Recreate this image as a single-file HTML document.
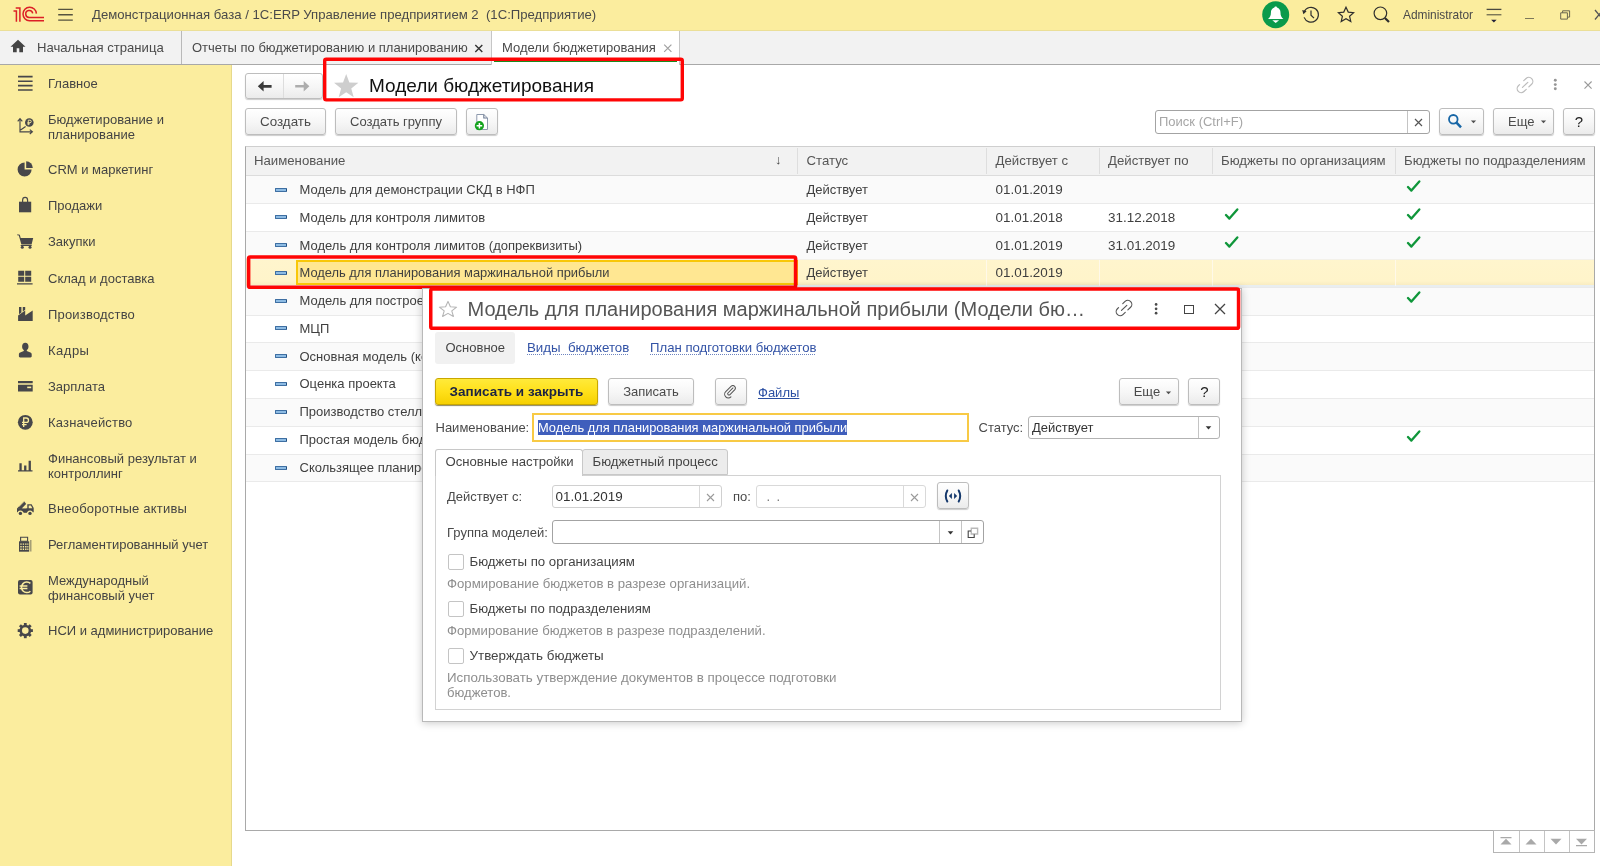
<!DOCTYPE html>
<html lang="ru"><head><meta charset="utf-8"><title>Модели бюджетирования</title>
<style>
*{box-sizing:border-box;margin:0;padding:0}
html,body{width:1600px;height:866px;overflow:hidden;background:#fff}
body{will-change:transform;font-family:"Liberation Sans",sans-serif;font-size:13px;color:#4a4a4a;position:relative}
.abs{position:absolute}
#top{position:absolute;left:0;top:0;width:1600px;height:31px;background:#fbed9e;border-bottom:1px solid #ebdf98}
#tabs{position:absolute;left:0;top:31px;width:1600px;height:34px;background:#f2f2f2;border-bottom:1px solid #a8a8a8}
#side{position:absolute;left:0;top:65px;width:232px;height:801px;background:#fbed9e;border-right:1px solid #e6d98c}
.t{position:absolute;white-space:nowrap;line-height:16px}
.mi{position:absolute;left:48px;white-space:nowrap;line-height:15px;font-size:13px;color:#444}
.btn{position:absolute;border:1px solid #bdbdbd;border-radius:3px;background:linear-gradient(#ffffff,#f6f6f6 55%,#ebebeb);box-shadow:0 1px 1px rgba(0,0,0,.2);text-align:center;font-size:13px;color:#4a4a4a;white-space:nowrap}
.row{position:absolute;left:246px;width:1348px;height:28px;box-shadow:inset 0 1px 0 #eaeaea}
.row.odd{background:#fafafa}
.c{position:absolute;white-space:nowrap;line-height:16px;font-size:13px;color:#3f3f3f}
.ic{position:absolute;left:29px;width:12px;height:4.400px;background:#8dbbe3;border:1px solid #3e6fa3;border-right:1.500px solid #24507f;border-radius:1px}
.dt{font-size:13.450px}
.lnk{color:#3353a6;text-decoration:underline dotted #6d84c0;text-decoration-thickness:1px;text-underline-offset:1.500px}
</style></head><body>
<div id="top">
<svg class="abs" style="left:0;top:0" width="80" height="30" viewBox="0 0 80 30">
<g fill="none" stroke="#dc1f26" stroke-width="1.5">
<path d="M13.500 10.900H16.400V21.800M15.700 7.900H19.900V21.800"/>
<path d="M36.400 13.600A6.700 6.700 0 1 0 29.500 20.700H44"/>
<path d="M32.700 13.400A3.500 3.500 0 1 0 29.500 17.500H44"/>
</g>
<g stroke="#55533f" stroke-width="1.300"><path d="M58.200 9.400H72.800M58.200 14.750H72.800M58.200 20.100H72.800"/></g></svg>
<div class="t" style="left:92px;top:7px;font-size:13.15px;color:#4a4a4a;white-space:pre">Демонстрационная база / 1С:ERP Управление предприятием 2  (1С:Предприятие)</div>
<svg class="abs" style="left:1262px;top:1px" width="28" height="28" viewBox="0 0 28 28"><circle cx="13.7" cy="13.7" r="13.5" fill="#0a9a4b"/><path d="M13.7 5.4c-.8 0-1.3.5-1.3 1.2-2.300.7-3.500 2.600-3.500 5.100 0 2.800-.9 4.700-2.900 6.300h15.400c-2-1.600-2.900-3.500-2.900-6.300 0-2.500-1.200-4.400-3.500-5.100 0-.7-.5-1.200-1.300-1.200z" fill="#fff"/><path d="M10.300 19.200h6.800l-3.400 2.700z" fill="#fff"/></svg>
<svg class="abs" style="left:1301px;top:5px" width="20" height="20" viewBox="0 0 20 20"><g fill="none" stroke="#2e2e2e" stroke-width="1.2"><path d="M3.300 6.600A7.400 7.400 0 1 1 3.100 12.400"/><path d="M10 5.500V10.200L13 13.200"/></g><path d="M1.200 5L5.600 6.200 2.400 9.200z" fill="#2e2e2e"/></svg>
<svg class="abs" style="left:1336px;top:5px" width="20" height="20" viewBox="0 0 20 20"><path d="M10 2.200l2.250 4.900 5.350.6-4 3.600 1.200 5.300-4.800-2.800-4.800 2.800 1.200-5.300-4-3.600 5.350-.6z" fill="none" stroke="#2e2e2e" stroke-width="1.2" stroke-linejoin="miter"/></svg>
<svg class="abs" style="left:1372px;top:5px" width="20" height="20" viewBox="0 0 20 20"><circle cx="8.4" cy="8.3" r="6.300" fill="none" stroke="#2e2e2e" stroke-width="1.2"/><path d="M12.900 12.900L17 17.100" stroke="#2e2e2e" stroke-width="2.200"/></svg>
<div class="t" style="left:1403px;top:7px;font-size:11.9px;color:#4a4a4a">Administrator</div>
<svg class="abs" style="left:1485px;top:7px" width="18" height="18" viewBox="0 0 18 18"><g stroke="#4a4a40" stroke-width="1.300"><path d="M1.600 2.400H16.400"/><path d="M1.600 7.750H16.400" stroke="#6f6b50"/></g><path d="M6.100 12.700H11.600L8.850 15.500z" fill="#22223a"/></svg>
<div class="abs" style="left:1525px;top:18px;width:9.200px;height:1.200px;background:#7d785a"></div>
<svg class="abs" style="left:1559px;top:9px" width="12" height="12" viewBox="0 0 12 12"><g fill="none" stroke="#6a6650" stroke-width="1"><path d="M1.700 3.800H8.400V10.100H1.700z"/><path d="M3.600 3.800V1.800H10.600V8.100H8.400"/></g></svg>
<svg class="abs" style="left:1593px;top:8px" width="12" height="14" viewBox="0 0 12 14"><path d="M2 2L10 11.500M10 2L2 11.500" stroke="#555" stroke-width="1.300"/></svg>
</div>
<div id="tabs">
<svg class="abs" style="left:10px;top:8px" width="16" height="14" viewBox="0 0 16 14"><path d="M8 0.800L0.500 7.800H3V13.200H6.700V9.200H9.300V13.200H13V7.800H15.500z" fill="#444"/></svg>
<div class="t" style="left:37px;top:9px;font-size:13.1px">Начальная страница</div>
<div class="abs" style="left:181px;top:0;width:1px;height:33px;background:#b9b9b9"></div>
<div class="t" style="left:192px;top:9px;font-size:13px">Отчеты по бюджетированию и планированию</div>
<svg class="abs" style="left:473px;top:11.500px" width="10" height="10" viewBox="0 0 10 10"><path d="M2.300 1.900L9.300 8.900M9.300 1.900L2.300 8.900" stroke="#333" stroke-width="1.400"/></svg>
<div class="abs" style="left:491px;top:0;width:189px;height:34px;background:#fff;border-left:1px solid #c6c6c6;border-right:1px solid #c6c6c6"></div>
<div class="t" style="left:502px;top:9px;font-size:13px">Модели бюджетирования</div>
<svg class="abs" style="left:662px;top:11.500px" width="10" height="10" viewBox="0 0 10 10"><path d="M2.200 1.700L9.400 8.900M9.400 1.700L2.200 8.900" stroke="#a0a0a0" stroke-width="1.200"/></svg>
<div class="abs" style="left:494px;top:29px;width:183px;height:2px;background:#1d8a1d"></div>
</div>
<div id="side">
<div class="mi" style="top:11.0px">Главное</div>
<div class="mi" style="top:47.0px;letter-spacing:0.05px">Бюджетирование и<br>планирование</div>
<div class="mi" style="top:97.3px">CRM и маркетинг</div>
<div class="mi" style="top:133.1px">Продажи</div>
<div class="mi" style="top:169.3px">Закупки</div>
<div class="mi" style="top:205.5px">Склад и доставка</div>
<div class="mi" style="top:241.8px;letter-spacing:0.19px">Производство</div>
<div class="mi" style="top:277.8px;letter-spacing:0.5px">Кадры</div>
<div class="mi" style="top:313.9px">Зарплата</div>
<div class="mi" style="top:350.0px;letter-spacing:0.17px">Казначейство</div>
<div class="mi" style="top:385.8px">Финансовый результат и<br>контроллинг</div>
<div class="mi" style="top:435.8px;letter-spacing:0.22px">Внеоборотные активы</div>
<div class="mi" style="top:471.9px">Регламентированный учет</div>
<div class="mi" style="top:507.7px">Международный<br>финансовый учет</div>
<div class="mi" style="top:558.1px">НСИ и администрирование</div>
<svg class="abs" style="left:0;top:0" width="48" height="600" viewBox="0 65 48 600">
<g fill="#47474a" stroke="none">
<!-- main -->
<path d="M18 75.800h14.600v1.650H18zM18 80.400h14.600v1.650H18zM18 84.800h14.600v1.650H18zM18 89.200h14.600v1.650H18z"/>
<!-- budgeting -->
<g fill="none" stroke="#47474a" stroke-width="1.150"><path d="M20 118.800V131.800H32M17.700 121.300L20 118.600 22.300 121.300M29.800 129.600L32.400 131.800 29.800 134M20.600 130L25.600 126.600"/></g><circle cx="29.300" cy="122.500" r="4.300" fill="#47474a"/><path d="M28.300 125.200V120.200H30a1.250 1.250 0 0 1 0 2.500H27.400M27.400 123.900H30" fill="none" stroke="#fbed9e" stroke-width=".9"/>
<!-- crm pie -->
<path d="M24.600 162.500A7 7 0 1 0 31.600 169.500H24.600z"/><path d="M26.200 161.300A6.600 6.600 0 0 1 32.800 167.900H26.200z"/>
<!-- bag -->
<path d="M19 201.700H31.200V212.300H19z"/><path d="M22.600 203.500V200.200a2.500 2.800 0 0 1 5 0V203.500" fill="none" stroke="#47474a" stroke-width="1.200"/>
<!-- cart -->
<path d="M17.400 234.300l2.400.5.900 3.100h12.500l-1.600 6.500H21.400l-2.600-8.900-1.600-.3zM20.700 245h11v1H20.700z"/><circle cx="22.300" cy="247.300" r="1.500"/><circle cx="30" cy="247.300" r="1.500"/>
<!-- warehouse -->
<path d="M18.200 270.700h6v5.100h-6zM25.200 270.700h6v5.100h-6zM18.200 276.700h6v5.100h-6zM25.200 276.700h6v5.100h-6zM17 283.300h15.600v1.300H17z"/>
<!-- factory -->
<path d="M18.100 321V315.600L25.200 310.600V315.600L32.700 310.400V321zM19 307.100H21.400V312.600L19 314.300zM22.800 307.100H25.200V309.700L22.800 311.500z"/>
<!-- person -->
<path d="M25.300 342.800c2 0 3.200 1.500 3.200 3.600 0 1.600-.7 3-1.700 3.700v.9l3.600 1.500c.9.400 1.300 1.100 1.300 2v1.700c0 .7-.5 1.200-1.200 1.200H20.100c-.7 0-1.200-.5-1.200-1.200v-1.700c0-.9.400-1.600 1.300-2l3.600-1.500v-.9c-1-.7-1.700-2.100-1.700-3.700 0-2.100 1.200-3.600 3.200-3.600z"/>
<!-- card -->
<path d="M18 381h14.700v2.300H18zM18 384.700h14.700v6.700H18z"/><path d="M27.200 386.600h4v1.600h-4z" fill="#fbed9e"/>
<!-- ruble coin -->
<circle cx="25.300" cy="422.300" r="7.400"/>
<g fill="none" stroke="#fbed9e" stroke-width="1.300"><path d="M23.700 427V418H26.300a2.200 2.200 0 0 1 0 4.400H22M22 424.600H26.600"/></g>
<!-- bars -->
<path d="M19.400 463.300h2.300v7h-2.300zM24.100 465.600h2.300v4.700h-2.300zM28.600 460.700h2.300v9.600h-2.300zM18 470.300h14.500v1.200H18z"/>
<!-- truck -->
<path d="M17 508.400L24.100 501.200 26.200 503.900 21.400 509z"/><path d="M18.600 506L23.800 500.800 24.600 501.700 19.400 507z" fill="#fbed9e" opacity=".45"/>
<path d="M17 508.300H27.300V504.200H31.600L33.700 508V512.300H17z"/><path d="M28.700 505.500H30.900L32.400 508.300H28.700z" fill="#fbed9e"/><path d="M22.200 508.300L26.300 504.200V508.300z" fill="#fbed9e"/>
<path d="M23 511H27.500L26.800 512.700H23.700z"/>
<circle cx="20.400" cy="513.300" r="2.900" fill="#fbed9e"/><circle cx="30" cy="513.300" r="2.900" fill="#fbed9e"/><circle cx="20.400" cy="513.400" r="1.700"/><circle cx="30" cy="513.400" r="1.700"/>
<!-- calc -->
<path d="M19 541.300h10.200v10.400H19z"/><path d="M20.600 537.300h7v4h-7z" fill="none" stroke="#47474a" stroke-width="1.100"/><path d="M30.200 540h1.200v11.500h-1.200z" opacity=".6"/>
<g fill="#fbed9e"><path d="M20.300 543.400h1.400v1.400h-1.400zM22.700 543.400h1.400v1.400h-1.400zM25.100 543.400h1.400v1.400h-1.400zM27.300 543.400h1.100v1.400h-1.100zM20.300 546h1.400v1.400h-1.400zM22.700 546h1.400v1.400h-1.400zM25.100 546h1.400v1.400h-1.400zM27.300 546h1.100v1.400h-1.100zM20.300 548.600h1.400v1.400h-1.400zM22.700 548.600h1.400v1.400h-1.400zM25.100 548.600h1.400v1.400h-1.400zM27.300 548.600h1.100v1.400h-1.100z"/></g>
<!-- euro -->
<rect x="18" y="580" width="14.600" height="14.600" rx="2"/>
<g fill="none" stroke="#fbed9e" stroke-width="1.500"><path d="M30.400 583.400A5.300 5.300 0 1 0 30.400 591.200M19.600 586H27.400M19.600 588.600H27.400"/></g>
<!-- gear -->
<g transform="translate(25.300 630.600)"><circle r="4.600" fill="none" stroke="#47474a" stroke-width="2.600"/>
<g><rect x="-1.400" y="-7.600" width="2.800" height="3"/><rect x="-1.400" y="4.600" width="2.800" height="3"/><rect x="-7.600" y="-1.400" width="3" height="2.800"/><rect x="4.600" y="-1.400" width="3" height="2.800"/>
<g transform="rotate(45)"><rect x="-1.400" y="-7.600" width="2.800" height="3"/><rect x="-1.400" y="4.600" width="2.800" height="3"/><rect x="-7.600" y="-1.400" width="3" height="2.800"/><rect x="4.600" y="-1.400" width="3" height="2.800"/></g></g></g>
</g></svg>
</div>
<div id="main">
<div class="btn" style="left:245px;top:73px;width:77.500px;height:26px"></div>
<div class="abs" style="left:283.300px;top:74px;width:1px;height:24px;background:#dddddd"></div>
<svg class="abs" style="left:257px;top:80px" width="16" height="13" viewBox="0 0 16 13"><path d="M0.800 6.300L6.600 1V4.900H14.600V7.700H6.600V11.600z" fill="#3a3a3a"/></svg>
<svg class="abs" style="left:294px;top:80px" width="16" height="13" viewBox="0 0 16 13"><path d="M15.400 6.300L9.700 1V5.100H1.200V7.500H9.700V11.600z" fill="#adadad"/></svg>
<svg class="abs" style="left:333px;top:73.400px" width="26.400" height="25.400" viewBox="0 0 26 25"><path d="M13 1l3.100 8.300 8.900.4-7 5.500 2.400 8.600L13 18.900 5.600 23.800 8 15.200 1 9.700l8.900-.4z" fill="#cecece"/></svg>
<div class="t" style="left:369px;top:74px;font-size:19px;line-height:24px;color:#111">Модели бюджетирования</div>
<div class="btn" style="left:245px;top:108px;width:81px;height:27px;line-height:25px;font-size:13.400px">Создать</div>
<div class="btn" style="left:335px;top:108px;width:122px;height:27px;line-height:25px">Создать группу</div>
<div class="btn" style="left:466px;top:108px;width:32px;height:27px"></div>
<svg class="abs" style="left:473px;top:112px" width="18" height="20" viewBox="0 0 18 20"><path d="M3.800 2.500H10.800L14.500 6V17.500H3.800z" fill="#fff" stroke="#8d99ad" stroke-width="1"/><path d="M10.800 2.500V6H14.500" fill="none" stroke="#6d7b93" stroke-width="1.100"/><circle cx="6.400" cy="13.700" r="4.600" fill="#13a31d"/><path d="M6.400 10.900V16.500M3.600 13.700H9.200" stroke="#fff" stroke-width="1.500"/></svg>
<svg class="abs" style="left:1514.700px;top:74.800px" width="20" height="20" viewBox="0 0 20 20"><path d="M8.76 5.65L11.08 3.45A4.0 4.0 0 0 1 16.60 9.24L13.85 11.86M4.56 9.66L3.40 10.76A4.0 4.0 0 0 0 8.92 16.55L11.24 14.35M7.47 12.41L12.82 7.31" fill="none" stroke="#bcbcbc" stroke-width="1.200" stroke-linecap="round"/></svg>
<svg class="abs" style="left:1552px;top:77px" width="6" height="16" viewBox="0 0 6 16"><g fill="#969696"><circle cx="3.300" cy="3.300" r="1.450"/><circle cx="3.300" cy="7.600" r="1.450"/><circle cx="3.300" cy="11.800" r="1.450"/></g></svg>
<svg class="abs" style="left:1582.600px;top:80px" width="10" height="10" viewBox="0 0 10 10"><path d="M1.500 1.500L8.600 8.600M8.600 1.500L1.500 8.600" stroke="#9a9a9a" stroke-width="1.100"/></svg>
<div class="abs" style="left:1155px;top:110px;width:275px;height:24px;border:1px solid #a3a3a3;border-radius:3px;background:#fff"></div>
<div class="abs" style="left:1407px;top:111px;width:1px;height:22px;background:#c4c4c4"></div>
<div class="t" style="left:1159px;top:114px;font-size:13px;color:#a6a6a6">Поиск (Ctrl+F)</div>
<svg class="abs" style="left:1414px;top:118px" width="9" height="9" viewBox="0 0 9 9"><path d="M1 1L8 8M8 1L1 8" stroke="#555" stroke-width="1.200"/></svg>
<div class="btn" style="left:1439px;top:108px;width:45px;height:27px"></div>
<svg class="abs" style="left:1447px;top:113px" width="16" height="16" viewBox="0 0 16 16"><circle cx="6.300" cy="6.300" r="4.300" fill="none" stroke="#1766a6" stroke-width="1.800"/><path d="M9.500 9.700L14 14.300" stroke="#1766a6" stroke-width="2.500"/></svg>
<svg class="abs" style="left:1470px;top:120px" width="7" height="4" viewBox="0 0 7 4"><path d="M0.900 0.500H6.100L3.500 3.300z" fill="#505050"/></svg>
<div class="btn" style="left:1493px;top:108px;width:61px;height:27px;line-height:25px;text-align:left;padding-left:14px">Еще</div>
<svg class="abs" style="left:1540px;top:120px" width="7" height="4" viewBox="0 0 7 4"><path d="M0.900 0.500H6.100L3.500 3.300z" fill="#505050"/></svg>
<div class="btn" style="left:1563px;top:108px;width:32px;height:27px;line-height:26px;color:#222;font-size:15px">?</div>
<div class="abs" style="left:245px;top:146px;width:1350px;height:685px;border:1px solid #a9a9a9;border-top-color:#cfcfcf;background:#fff"></div>
<div class="abs" style="left:246px;top:147px;width:1348px;height:29px;background:#f2f2f2;border-bottom:1px solid #dcdcdc"></div>
<div class="abs" style="left:797px;top:148px;width:1px;height:26px;background:#dedede"></div><div class="abs" style="left:986px;top:148px;width:1px;height:26px;background:#dedede"></div><div class="abs" style="left:1099px;top:148px;width:1px;height:26px;background:#dedede"></div><div class="abs" style="left:1212px;top:148px;width:1px;height:26px;background:#dedede"></div><div class="abs" style="left:1395px;top:148px;width:1px;height:26px;background:#dedede"></div>
<div class="t" style="left:254px;top:153px;color:#555;font-size:13.2px">Наименование</div><div class="t" style="left:806.5px;top:153px;color:#555;font-size:13.2px">Статус</div><div class="t" style="left:995.5px;top:153px;color:#555;font-size:13.2px">Действует с</div><div class="t" style="left:1108px;top:153px;color:#555;font-size:13.2px">Действует по</div><div class="t" style="left:1221px;top:153px;color:#555;font-size:13.2px">Бюджеты по организациям</div><div class="t" style="left:1404px;top:153px;color:#555;font-size:13.2px">Бюджеты по подразделениям</div><div class="t" style="left:775px;top:152px;color:#444;font-size:13px">↓</div>
<!--rows-->
<div class="row odd" style="top:176px;height:27px;box-shadow:none"><div class="ic" style="top:12px"></div><div class="c" style="left:53.500px;top:6px">Модель для демонстрации СКД в НФП</div><div class="c" style="left:560.500px;top:6px">Действует</div><div class="c dt" style="left:749.500px;top:6px">01.01.2019</div><svg class="abs" style="left:1160px;top:4px" width="15" height="13" viewBox="0 0 15 13"><path d="M2 7L5.400 10.600 13.300 1.400" fill="none" stroke="#0f963a" stroke-width="2.300" stroke-linecap="round" stroke-linejoin="round"/></svg></div>
<div class="row" style="top:203px;height:28px"><div class="ic" style="top:12px"></div><div class="c" style="left:53.500px;top:7px">Модель для контроля лимитов</div><div class="c" style="left:560.500px;top:7px">Действует</div><div class="c dt" style="left:749.500px;top:7px">01.01.2018</div><div class="c dt" style="left:862px;top:7px">31.12.2018</div><svg class="abs" style="left:978px;top:5px" width="15" height="13" viewBox="0 0 15 13"><path d="M2 7L5.400 10.600 13.300 1.400" fill="none" stroke="#0f963a" stroke-width="2.300" stroke-linecap="round" stroke-linejoin="round"/></svg><svg class="abs" style="left:1160px;top:5px" width="15" height="13" viewBox="0 0 15 13"><path d="M2 7L5.400 10.600 13.300 1.400" fill="none" stroke="#0f963a" stroke-width="2.300" stroke-linecap="round" stroke-linejoin="round"/></svg></div>
<div class="row odd" style="top:231px;height:28px"><div class="ic" style="top:12px"></div><div class="c" style="left:53.500px;top:7px">Модель для контроля лимитов (допреквизиты)</div><div class="c" style="left:560.500px;top:7px">Действует</div><div class="c dt" style="left:749.500px;top:7px">01.01.2019</div><div class="c dt" style="left:862px;top:7px">31.01.2019</div><svg class="abs" style="left:978px;top:5px" width="15" height="13" viewBox="0 0 15 13"><path d="M2 7L5.400 10.600 13.300 1.400" fill="none" stroke="#0f963a" stroke-width="2.300" stroke-linecap="round" stroke-linejoin="round"/></svg><svg class="abs" style="left:1160px;top:5px" width="15" height="13" viewBox="0 0 15 13"><path d="M2 7L5.400 10.600 13.300 1.400" fill="none" stroke="#0f963a" stroke-width="2.300" stroke-linecap="round" stroke-linejoin="round"/></svg></div>
<div class="row" style="top:259px;height:28px;background:linear-gradient(#fff5cd 0,#fff4ca 22px,#f8ebc0 26.500px,#e9eef0 26.500px);box-shadow:inset 0 1px 0 #f3f1ea"><div class="abs" style="left:49.700px;top:1px;width:502px;height:25px;background:#ffe792;border:2.100px solid #f8c708"></div><div class="abs" style="left:740px;top:1px;width:1px;height:25.500px;background:#fffaf0;opacity:.8"></div><div class="abs" style="left:853px;top:1px;width:1px;height:25.500px;background:#fffaf0;opacity:.8"></div><div class="abs" style="left:966px;top:1px;width:1px;height:25.500px;background:#fffaf0;opacity:.8"></div><div class="abs" style="left:1149px;top:1px;width:1px;height:25.500px;background:#fffaf0;opacity:.8"></div><div class="ic" style="top:12px"></div><div class="c" style="left:53.500px;top:6px;font-size:12.900px">Модель для планирования маржинальной прибыли</div><div class="c" style="left:560.500px;top:6px">Действует</div><div class="c dt" style="left:749.500px;top:6px">01.01.2019</div></div>
<div class="row odd" style="top:287px;height:28px"><div class="ic" style="top:12px"></div><div class="c" style="left:53.500px;top:6px">Модель для построения бюджетов</div><div class="c" style="left:560.500px;top:6px">Действует</div><div class="c dt" style="left:749.500px;top:6px">01.01.2019</div><svg class="abs" style="left:1160px;top:4px" width="15" height="13" viewBox="0 0 15 13"><path d="M2 7L5.400 10.600 13.300 1.400" fill="none" stroke="#0f963a" stroke-width="2.300" stroke-linecap="round" stroke-linejoin="round"/></svg></div>
<div class="row" style="top:315px;height:27px"><div class="ic" style="top:11px"></div><div class="c" style="left:53.500px;top:6px">МЦП</div><div class="c" style="left:560.500px;top:6px">Действует</div><div class="c dt" style="left:749.500px;top:6px">01.01.2019</div></div>
<div class="row odd" style="top:342px;height:28px"><div class="ic" style="top:12px"></div><div class="c" style="left:53.500px;top:7px">Основная модель (консолидация)</div><div class="c" style="left:560.500px;top:7px">Действует</div><div class="c dt" style="left:749.500px;top:7px">01.01.2019</div></div>
<div class="row" style="top:370px;height:28px"><div class="ic" style="top:12px"></div><div class="c" style="left:53.500px;top:6px">Оценка проекта</div><div class="c" style="left:560.500px;top:6px">Действует</div><div class="c dt" style="left:749.500px;top:6px">01.01.2019</div></div>
<div class="row odd" style="top:398px;height:28px"><div class="ic" style="top:12px"></div><div class="c" style="left:53.500px;top:6px">Производство стеллажей</div><div class="c" style="left:560.500px;top:6px">Действует</div><div class="c dt" style="left:749.500px;top:6px">01.01.2019</div></div>
<div class="row" style="top:426px;height:28px"><div class="ic" style="top:12px"></div><div class="c" style="left:53.500px;top:6px">Простая модель бюджетирования</div><div class="c" style="left:560.500px;top:6px">Действует</div><div class="c dt" style="left:749.500px;top:6px">01.01.2019</div><svg class="abs" style="left:1160px;top:4px" width="15" height="13" viewBox="0 0 15 13"><path d="M2 7L5.400 10.600 13.300 1.400" fill="none" stroke="#0f963a" stroke-width="2.300" stroke-linecap="round" stroke-linejoin="round"/></svg></div>
<div class="row odd" style="top:454px;height:27px"><div class="ic" style="top:12px"></div><div class="c" style="left:53.500px;top:6px">Скользящее планирование</div><div class="c" style="left:560.500px;top:6px">Действует</div><div class="c dt" style="left:749.500px;top:6px">01.01.2019</div></div>
<div class="row" style="top:481px;height:1px"></div>
<!--/rows-->
<div class="abs" style="left:1493px;top:830px;width:102px;height:23px;border:1px solid #b5b5b5;background:#fff"></div>
<div class="abs" style="left:1518.5px;top:831px;width:1px;height:21px;background:#c4c4c4"></div><div class="abs" style="left:1543.8px;top:831px;width:1px;height:21px;background:#c4c4c4"></div><div class="abs" style="left:1569px;top:831px;width:1px;height:21px;background:#c4c4c4"></div>
<svg class="abs" style="left:1493px;top:830px" width="102" height="23" viewBox="0 0 102 23"><g fill="#a9a9a9"><path d="M7.500 14.500L13 8.700 18.500 14.500zM7.500 7H18.500V8.200H7.500z"/><path d="M32.500 14.500L38 8.700 43.500 14.500z"/><path d="M57.500 8.700L63 14.500 68.500 8.700z"/><path d="M83 8.700L88.500 14.500 94 8.700zM83 15H94V16.200H83z"/></g></svg>
<svg class="abs" style="left:0;top:0;pointer-events:none" width="1600" height="866" viewBox="0 0 1600 866"><rect x="324.70" y="59.20" width="357.60" height="40.70" rx="1.6" fill="none" stroke="#ff0505" stroke-width="3.4"/><rect x="248.60" y="257.00" width="547.00" height="30.30" rx="1.6" fill="none" stroke="#ff0505" stroke-width="3.6"/></svg>
</div>
<div id="dlg" style="font-size:13px;position:absolute;left:422px;top:288px;width:820px;height:434px;background:#fff;border:1px solid #b9b9b9;box-shadow:0 1px 8px rgba(0,0,0,.22)">
<svg class="abs" style="left:14.700px;top:11.200px" width="20" height="17.700" viewBox="0 0 20 19" preserveAspectRatio="none"><path d="M10 1.500l2.400 5.800 6.200.4-4.800 4 1.600 6L10 14.300 4.600 17.700l1.600-6-4.800-4 6.200-.4z" fill="#fff" stroke="#b5b5b5" stroke-width="1.100" stroke-linejoin="round"/></svg>
<div class="t" style="left:44.5px;top:7px;font-size:20px;line-height:26px;color:#555">Модель для планирования маржинальной прибыли (Модели бю…</div>
<svg class="abs" style="left:691px;top:9.1px" width="20" height="20" viewBox="0 0 20 20"><path d="M8.76 5.65L11.08 3.45A4.0 4.0 0 0 1 16.60 9.24L13.85 11.86M4.56 9.66L3.40 10.76A4.0 4.0 0 0 0 8.92 16.55L11.24 14.35M7.47 12.41L12.82 7.31" fill="none" stroke="#555" stroke-width="1.150" stroke-linecap="round"/></svg>
<svg class="abs" style="left:730.3px;top:12px" width="6" height="16" viewBox="0 0 6 16"><g fill="#4a4a4a"><circle cx="3.100" cy="3.400" r="1.350"/><circle cx="3.100" cy="7.800" r="1.350"/><circle cx="3.100" cy="12.200" r="1.350"/></g></svg>
<div class="abs" style="left:761px;top:15.5px;width:9.500px;height:9.500px;border:1.200px solid #444"></div>
<svg class="abs" style="left:791px;top:14px" width="12" height="12" viewBox="0 0 12 12"><path d="M1 1L11 11M11 1L1 11" stroke="#444" stroke-width="1.300"/></svg>
<div class="abs" style="left:12px;top:43px;width:80px;height:32px;background:#f1f1f1;border-radius:3px"></div>
<div class="t" style="left:22.5px;top:51px;color:#444">Основное</div>
<div class="t lnk" style="left:104px;top:51px;white-space:pre;font-size:13.300px">Виды  бюджетов</div>
<div class="t lnk" style="left:227px;top:51px;font-size:13.180px">План подготовки бюджетов</div>
<div class="btn" style="left:12px;top:89px;width:163px;height:27px;line-height:25px;font-weight:bold;font-size:13.500px;color:#1c2343;background:linear-gradient(#ffea3a,#ffe01a 50%,#f6d000);border-color:#c9a700;box-shadow:0 1px 1px rgba(80,70,10,.65)">Записать и закрыть</div>
<div class="btn" style="left:185px;top:89px;width:86px;height:27px;line-height:25px">Записать</div>
<div class="btn" style="left:291.5px;top:89px;width:32px;height:27px"></div>
<svg class="abs" style="left:300.2px;top:96.2px" width="14.500" height="13.600" viewBox="0 0 17 16"><path d="M12.200 4.300L6.300 10.200a1.500 1.500 0 0 0 2.100 2.100l6-6a3 3 0 0 0-4.200-4.200L3.700 8.600a4.300 4.300 0 0 0 6.100 6.100" fill="none" stroke="#555" stroke-width="1.200" stroke-linecap="round" transform="translate(-.5 -.8)"/></svg>
<div class="t" style="left:335px;top:95.5px;color:#2b4fa3;text-decoration:underline">Файлы</div>
<div class="btn" style="left:695.7px;top:89px;width:60px;height:27px;line-height:25px;text-align:left;padding-left:14px">Еще</div>
<svg class="abs" style="left:742px;top:101.5px" width="7" height="4" viewBox="0 0 7 4"><path d="M0.900 0.500H6.100L3.500 3.300z" fill="#505050"/></svg>
<div class="btn" style="left:765.3px;top:89px;width:32px;height:27px;line-height:26px;color:#222;font-size:15px">?</div>
<div class="t" style="left:12.5px;top:131px">Наименование:</div>
<div class="abs" style="left:108.900px;top:124.200px;width:437px;height:28.600px;border:2px solid #f8ca45;background:#fff"></div>
<div class="t" style="left:115px;top:131px;background:#3f5ebc;color:#fff;line-height:15px;font-size:12.87px">Модель для планирования маржинальной прибыли</div>
<div class="t" style="left:555.5px;top:131px">Статус:</div>
<div class="abs" style="left:605.2px;top:127px;width:192px;height:23px;border:1px solid #b3b3b3;border-radius:3px;background:#fff"></div>
<div class="abs" style="left:774.7px;top:128px;width:1px;height:21px;background:#c4c4c4"></div>
<div class="t" style="left:609px;top:131px;color:#333">Действует</div>
<svg class="abs" style="left:782.3px;top:137px" width="7" height="4" viewBox="0 0 7 4"><path d="M0.700 0.300H6.300L3.500 3.500z" fill="#333"/></svg>
<div class="abs" style="left:12px;top:185.5px;width:786px;height:235px;border:1px solid #d2d2d2;background:#fff"></div>
<div class="abs" style="left:12px;top:160.3px;width:148px;height:27px;border:1px solid #c8c8c8;border-bottom:none;border-radius:3px 3px 0 0;background:#fff"></div>
<div class="abs" style="left:159.2px;top:160.3px;width:146px;height:25.500px;border:1px solid #c8c8c8;border-radius:3px 3px 0 0;background:#ececec"></div>
<div class="t" style="left:22.5px;top:165px;color:#444;font-size:13.150px">Основные настройки</div>
<div class="t" style="left:169.5px;top:165px;color:#444;font-size:13.200px">Бюджетный процесс</div>
<div class="t" style="left:24px;top:200px">Действует с:</div>
<div class="abs" style="left:129px;top:196px;width:170px;height:23px;border:1px solid #d0d0d0;border-radius:3px;background:#fff"></div>
<div class="abs" style="left:276.3px;top:197px;width:1px;height:21px;background:#d9d9d9"></div>
<div class="t" style="left:132.5px;top:200px;color:#333;font-size:13.450px">01.01.2019</div>
<svg class="abs" style="left:283px;top:204px" width="9" height="9" viewBox="0 0 9 9"><path d="M1 1L8 8M8 1L1 8" stroke="#9a9a9a" stroke-width="1.100"/></svg>
<div class="t" style="left:310px;top:200px">по:</div>
<div class="abs" style="left:332.7px;top:196px;width:170px;height:23px;border:1px solid #d9d9d9;border-radius:3px;background:#fff"></div>
<div class="abs" style="left:480.4px;top:197px;width:1px;height:21px;background:#d9d9d9"></div>
<div class="t" style="left:341px;top:200px;color:#777;white-space:pre;letter-spacing:1.400px;margin-left:2.600px">. .</div>
<svg class="abs" style="left:486.5px;top:204px" width="9" height="9" viewBox="0 0 9 9"><path d="M1 1L8 8M8 1L1 8" stroke="#9a9a9a" stroke-width="1.100"/></svg>
<div class="btn" style="left:514px;top:193px;width:32px;height:27px"></div>
<svg class="abs" style="left:520px;top:200px" width="20" height="14" viewBox="0 0 20 14"><g fill="none" stroke="#14386c" stroke-width="2" stroke-linecap="round"><path d="M4.300 1.500Q1.300 7 4.300 12.500M15.700 1.500Q18.700 7 15.700 12.500"/></g><path d="M8.900 4.100V9.900L5.900 7zM11.100 4.100V9.900L14.100 7z" fill="#14386c"/></svg>
<div class="t" style="left:24px;top:235.5px">Группа моделей:</div>
<div class="abs" style="left:129px;top:231.4px;width:432px;height:24px;border:1px solid #a3a3a3;border-radius:3px;background:#fff"></div>
<div class="abs" style="left:516.4px;top:232.4px;width:1px;height:22px;background:#c4c4c4"></div>
<div class="abs" style="left:538.3px;top:232.4px;width:1px;height:22px;background:#c4c4c4"></div>
<svg class="abs" style="left:524px;top:241.5px" width="7" height="4" viewBox="0 0 7 4"><path d="M0.700 0.300H6.300L3.500 3.500z" fill="#333"/></svg>
<svg class="abs" style="left:543.5px;top:237.5px" width="12" height="12" viewBox="0 0 12 12"><g fill="none"><path d="M4.300 1.200H10.600V7H4.300z" stroke="#b9b9b9" stroke-width="1.400"/><path d="M4 4H1.200V10.500H7.200V7.300" stroke="#444" stroke-width="1.100"/></g></svg>
<div class="abs" style="left:24.5px;top:265px;width:16px;height:16px;border:1px solid #c4c4c4;border-radius:2px;background:#fff"></div><div class="t" style="left:46.5px;top:265px;color:#444;font-size:13.250px">Бюджеты по организациям</div><div class="t" style="left:24px;top:287px;color:#8e8e8e;font-size:13.190px">Формирование бюджетов в разрезе организаций.</div>
<div class="abs" style="left:24.5px;top:312px;width:16px;height:16px;border:1px solid #c4c4c4;border-radius:2px;background:#fff"></div><div class="t" style="left:46.5px;top:312px;color:#444;font-size:13.180px">Бюджеты по подразделениям</div><div class="t" style="left:24px;top:334px;color:#8e8e8e;font-size:13.140px">Формирование бюджетов в разрезе подразделений.</div>
<div class="abs" style="left:24.5px;top:359px;width:16px;height:16px;border:1px solid #c4c4c4;border-radius:2px;background:#fff"></div><div class="t" style="left:46.5px;top:359px;color:#444;font-size:13.400px">Утверждать бюджеты</div><div class="t" style="left:24px;top:381px;color:#8e8e8e;font-size:13.330px">Использовать утверждение документов в процессе подготовки</div><div class="t" style="left:24px;top:396px;color:#8e8e8e;font-size:13.100px">бюджетов.</div>
</div>
<svg class="abs" style="left:0;top:0;pointer-events:none" width="1600" height="866" viewBox="0 0 1600 866"><rect x="430.75" y="289.05" width="807.80" height="39.20" rx="1.6" fill="none" stroke="#ff0505" stroke-width="3.5"/></svg>
</body></html>
